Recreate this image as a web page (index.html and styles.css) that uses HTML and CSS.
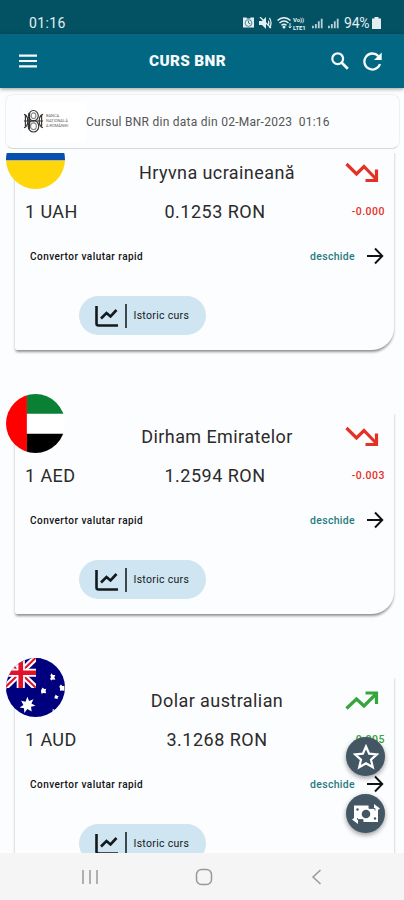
FILE: index.html
```
<!DOCTYPE html>
<html lang="ro">
<head>
<meta charset="utf-8">
<title>Curs BNR</title>
<link rel="stylesheet" href="styles.css">
</head>
<body>
<svg class="defs" aria-hidden="true">
  <symbol id="down" viewBox="0 0 34 22"><path d="M1.5 2 11.5 12 19 4.500 31 17M31.500 7.500V18.500H20.500" fill="none" stroke="currentColor" stroke-width="3.200"/></symbol>
  <symbol id="up" viewBox="0 0 34 22"><path d="M1.500 18.500 11.500 9 19 16 31 4M20.500 3H31.500V14" fill="none" stroke="currentColor" stroke-width="3.200"/></symbol>
  <symbol id="arrow" viewBox="0 0 18 18"><path d="M1 9H16M9 1.500 16.300 9 9 16.500" fill="none" stroke="currentColor" stroke-width="1.900"/></symbol>
  <symbol id="chart" viewBox="0 0 24 22"><path d="M1.500 1V18.500Q1.500 20.500 3.500 20.500H23" fill="none" stroke="currentColor" stroke-width="2.600"/><path d="M6 13.500 11.500 8 15.500 11.500 21.500 5" fill="none" stroke="currentColor" stroke-width="2.600"/></symbol>
  <symbol id="bars" viewBox="0 0 12 11"><path d="M0 8h2v3H0zM3.200 6h2v5h-2zM6.400 3h2v8h-2zM9.600 0h2v11h-2z" fill="currentColor"/></symbol>
</svg>
<header class="status">
  <span class="time">01:16</span>
  <span class="indicators">
    <svg class="i-alarm" viewBox="0 0 12 12"><path d="M0 0h4v1h4V0h4v11H0z" fill="currentColor"/><circle cx="6" cy="6" r="3.700" fill="none" stroke="#035264" stroke-width=".7"/><path d="M6 3.500V6l2 1" fill="none" stroke="#035264" stroke-width=".8"/></svg>
    <svg class="i-mute" viewBox="0 0 13 12"><path d="M0 4h3l4-4v12L3 8H0zM9 3q3 3 0 6" fill="currentColor"/><path d="M10.500 1q3 5 0 10M1 0l11 11" fill="none" stroke="currentColor" stroke-width="1.300"/></svg>
    <svg class="i-wifi" viewBox="0 0 16 12"><path d="M.5 3.500Q7 -2 13.500 3.500M2.500 6Q7 2 11.500 6M4.500 8.300Q7 6.300 9.500 8.300" fill="none" stroke="currentColor" stroke-width="1.500"/><circle cx="7" cy="10" r="1.500" fill="currentColor"/><path d="M13 6v5m-1.300-1.500L13 11l1.400-1.500" stroke="currentColor" fill="none"/></svg>
    <span class="volte"><span>Vo))</span><span>LTE1</span></span>
    <svg class="i-sig" viewBox="0 0 12 11"><use href="#bars"/></svg>
    <svg class="i-sig" viewBox="0 0 12 11"><use href="#bars"/></svg>
    <span class="percent">94%</span>
    <svg class="i-bat" viewBox="0 0 9 12"><path d="M2.500 0h4v1.500H9V12H0V1.500h2.500z" fill="currentColor"/></svg>
  </span>
</header>
<nav class="appbar">
  <svg class="menu" viewBox="0 0 19 14"><path d="M0 1.300h19M0 7h19M0 12.700h19" stroke="currentColor" stroke-width="2.200"/></svg>
  <h1>CURS BNR</h1>
  <svg class="search" viewBox="0 0 18 18"><circle cx="6.700" cy="6.700" r="5.400" fill="none" stroke="currentColor" stroke-width="2.200"/><path d="M10.500 10.500 16.800 16.800" stroke="currentColor" stroke-width="2.700"/></svg>
  <svg class="refresh" viewBox="0 0 19 19"><path d="M15.300 4.100A8 8 0 1 0 17 12" fill="none" stroke="currentColor" stroke-width="2.300"/><path d="M18.700.5V8H11z" fill="currentColor"/></svg>
</nav>
<section class="info">
  <div class="bnr">
    <svg viewBox="0 0 22 26"><g fill="none" stroke="#333" stroke-width="1.200"><ellipse cx="11" cy="7" rx="5" ry="5.500"/><ellipse cx="11" cy="18" rx="5.500" ry="6"/><ellipse cx="11" cy="7" rx="2.500" ry="3" stroke="#888"/><ellipse cx="11" cy="18" rx="3" ry="3.500" stroke="#888"/><path d="M6.500 4v17" stroke-width="2"/><path d="M1 5.500q4 1 4 7t-4 7M21 5.500q-4 1-4 7t4 7M2.500 7v11M19.500 7v11M1 12.500h20"/></g></svg>
    <span>BANCA<br>NAȚIONALĂ<br>A ROMÂNIEI</span>
  </div>
  <p>Cursul BNR din data din 02-Mar-2023 &nbsp;01:16</p>
</section>
<main class="list">
  <article class="item">
    <svg class="flag" viewBox="0 0 58 58"><clipPath id="c"><circle cx="29" cy="29" r="29"/></clipPath><g clip-path="url(#c)"><path fill="#0b4fae" d="M0 0h58v30H0z"/><path fill="#ffd60a" d="M0 30h58v28H0z"/></g></svg>
    <div class="card">
      <div class="row"><h2>Hryvna ucraineană</h2><svg class="trend fall"><use href="#down"/></svg></div>
      <div class="row"><span class="unit">1 UAH</span><span class="rate">0.1253 RON</span><span class="delta fall">-0.000</span></div>
      <div class="row quick"><span class="conv">Convertor valutar rapid</span><span class="open">deschide</span><svg class="arrow"><use href="#arrow"/></svg></div>
      <button class="history"><svg><use href="#chart"/></svg><i></i><span>Istoric curs</span></button>
    </div>
  </article>
  <article class="item">
    <svg class="flag" viewBox="0 0 58 58"><g clip-path="url(#c)"><path fill="#fff" d="M0 0h58v58H0z"/><path fill="#0a8035" d="M20 0h38v19.500H20z"/><path fill="#000" d="M20 39h38v19H20z"/><path fill="#f00" d="M0 0h20.500v58H0z"/></g></svg>
    <div class="card">
      <div class="row"><h2>Dirham Emiratelor</h2><svg class="trend fall"><use href="#down"/></svg></div>
      <div class="row"><span class="unit">1 AED</span><span class="rate">1.2594 RON</span><span class="delta fall">-0.003</span></div>
      <div class="row quick"><span class="conv">Convertor valutar rapid</span><span class="open">deschide</span><svg class="arrow"><use href="#arrow"/></svg></div>
      <button class="history"><svg><use href="#chart"/></svg><i></i><span>Istoric curs</span></button>
    </div>
  </article>
  <article class="item">
    <svg class="flag" viewBox="0 0 58 58"><g clip-path="url(#c)"><path fill="#00007f" d="M0 0h58v58H0z"/><path d="M-1 0 29 29M29 0-1 29" stroke="#fff" stroke-width="6"/><path d="M-1 0 29 29M29 0-1 29" stroke="#e2122d" stroke-width="2"/><path d="M0 14.500h29.500M14.500 0v29.500" stroke="#fff" stroke-width="8"/><path d="M0 14.500h29.500M14.500 0v29.500" stroke="#e2122d" stroke-width="4.600"/><path fill="#00007f" d="M29.500 0h5v34h-34v-4.500h29z"/><g fill="#fff"><path d="m21 38 1.700 4.200 4.300-1.700-2 4.200 4 2.200-4.400 1 .6 4.600-4.200-2.300L18 54l-.3-4.500-4.300-.8 3.700-2.600-2.200-4 4.300 1z"/><path d="m45 15 1 1.800h2.500l-1 2.200 1 2.400-2.600-.2L44.500 22l-1.200-1.500 1-1.600-.7-2zM36 29l1.500 1.500 2-.2-.6 2.200.6 2.200-2.500-.2-2 .7-.7-2.200.5-2zM54 26l1.500 1.500h2v4.700l-2.500-.2-2 .2.200-2.200-.8-2zM49 36l1 1.200 1.800.3-1 1.500-.2 1.500-1.500-.7-1.500.1.200-1.700z"/><path d="m46 50 2 1.500 2.500.1-.6 2 .1 2.600-3 .2-1.500-1.600z"/></g></g></svg>
    <div class="card">
      <div class="row"><h2>Dolar australian</h2><svg class="trend rise"><use href="#up"/></svg></div>
      <div class="row"><span class="unit">1 AUD</span><span class="rate wide">3.1268 RON</span><span class="delta rise">0.005</span></div>
      <div class="row quick"><span class="conv">Convertor valutar rapid</span><span class="open">deschide</span><svg class="arrow"><use href="#arrow"/></svg></div>
      <button class="history"><svg><use href="#chart"/></svg><i></i><span>Istoric curs</span></button>
    </div>
  </article>
</main>
<div class="fabs">
  <button class="fab"><svg viewBox="0 0 26 26"><path d="m13 2.500 3.100 7.200 7.800.7-5.900 5.200 1.800 7.700-6.800-4.100-6.800 4.100L8 15.600l-5.900-5.200 7.800-.7z" fill="none" stroke="#fff" stroke-width="2.200"/></svg></button>
  <button class="fab"><svg viewBox="0 0 30 26"><path d="M3 4.500h15V7h5V3l6 4.500-2 1.500v12H12v-2H7v4l-6-4.500L3 17z" fill="#fff"/><path d="M18 4v3.500h6V9.500M12 22v-3.500H6.500V17" fill="none" stroke="#435664" stroke-width=".9"/><circle cx="15" cy="13" r="4.300" fill="#435664"/><circle cx="6.500" cy="8.500" r="1.200" fill="#435664"/><circle cx="24" cy="17.500" r="1.200" fill="#435664"/></svg></button>
</div>
<footer class="sysnav">
  <svg viewBox="0 0 18 18"><path d="M2 2v14M9 2v14M16 2v14" stroke="#999" stroke-width="1.500"/></svg>
  <svg viewBox="0 0 18 18"><rect x="1.500" y="1.500" width="15" height="15" rx="5" fill="none" stroke="#999" stroke-width="1.500"/></svg>
  <svg viewBox="0 0 18 18"><path d="M12.500 2 5 9l7.500 7" fill="none" stroke="#999" stroke-width="1.500"/></svg>
</footer>
</body>
</html>
```
FILE: styles.css
```
* { box-sizing: border-box; }
body {
  margin: 0;
  width: 404px;
  height: 900px;
  overflow: hidden;
  display: flex;
  flex-direction: column;
  background: #fbfdfe;
  color: #2b2b2b;
  font-family: Roboto, sans-serif;
}
h1, h2, p { margin: 0; }
svg { display: block; flex: none; }
button { border: 0; padding: 0; font-family: inherit; }
.defs { position: absolute; width: 0; height: 0; }

.status {
  height: 34px;
  padding: 12px 23px 0 29px;
  display: flex;
  justify-content: space-between;
  align-items: center;
  background: #035264;
  color: #e3eef1;
}
.time { font-size: 14px; letter-spacing: .4px; }
.indicators { display: flex; align-items: center; }
.i-alarm { width: 11px; height: 12px; margin-right: 5px; }
.i-mute { width: 13px; height: 12px; margin-right: 5px; }
.i-wifi { width: 16px; height: 12px; }
.volte { display: flex; flex-direction: column; gap: 1px; width: 15px; margin-right: 4px; font-size: 6px; line-height: 7px; font-weight: 700; letter-spacing: -.1px; }
.i-sig { width: 11px; height: 11px; margin-right: 5px; opacity: .8; }
.percent { font-size: 14px; width: 28px; letter-spacing: -.2px; }
.i-bat { width: 9px; height: 12px; }

.appbar {
  position: relative;
  z-index: 1;
  height: 54px;
  flex: none;
  display: flex;
  align-items: center;
  padding: 0 22px 0 19px;
  background: #026783;
  color: #f5fafb;
  box-shadow: 0 1px 4px rgba(0, 0, 0, .4);
}
.menu { width: 18px; height: 14px; }
.appbar h1 { margin-left: 112px; flex: 1; font-size: 15.300px; font-weight: 900; letter-spacing: .35px; white-space: nowrap; }
.search { width: 18px; height: 18px; margin-right: 14px; }
.refresh { width: 19px; height: 19px; }

.info {
  margin: 6px 4px 0 5px;
  height: 55px;
  flex: none;
  display: flex;
  align-items: center;
  border: 1px solid #eef0f2;
  border-bottom: 1.500px solid #d5d7da;
  border-radius: 8px;
  background: #fcfdfe;
}
.bnr { width: 63px; height: 40px; margin-left: 17px; display: flex; align-items: center; gap: 2px; background: #fff; }
.bnr svg { width: 21px; height: 25px; }
.bnr span { font-size: 4px; line-height: 4.700px; color: #666; }
.info p { font-size: 12px; letter-spacing: .26px; color: #555; white-space: nowrap; }

.list { margin-top: 4px; height: 700px; flex: none; overflow: hidden; }
.item { position: relative; height: 264px; padding: 15px 10px 0 15px; }
.item:first-child { margin-top: -23px; }
.flag { position: absolute; z-index: 1; left: 5.500px; top: 0; width: 59px; height: 59px; }
.card {
  height: 205px;
  padding-top: 8px;
  border-radius: 4px 4px 22px 2px;
  background: #fcfdfe;
  box-shadow: 0 3px 3px -1px rgba(0, 0, 0, .36), 0 1px 3px rgba(0, 0, 0, .16);
  clip-path: inset(5px -8px -8px -8px);
}
.row { height: 39px; display: grid; grid-template-columns: 102px 200px 1fr; align-items: center; padding-right: 9px; }
.row h2 { grid-column: 2; text-align: center; font-size: 18px; font-weight: 400; letter-spacing: .42px; white-space: nowrap; }
.trend { width: 34px; height: 22px; margin-left: 28px; }
.fall { color: #e53026; }
.rise { color: #35a53c; }
.unit { padding-left: 10px; font-size: 18px; letter-spacing: .4px; white-space: nowrap; }
.rate { padding-right: 4px; text-align: center; font-size: 18px; letter-spacing: .5px; }
.rate.wide { padding: 0; }
.delta { text-align: right; font-size: 10.500px; font-weight: 500; letter-spacing: .5px; }
.quick { height: 50px; display: flex; padding: 0 10px 0 15px; }
.conv { flex: 1; font-size: 10px; font-weight: 500; letter-spacing: .47px; color: #111; }
.open { font-size: 10.500px; font-weight: 500; letter-spacing: .3px; color: #277a82; }
.arrow { width: 18px; height: 18px; margin-left: 11px; color: #111; }
.history {
  width: 127px;
  height: 39px;
  margin: 15px 0 0 63.500px;
  display: flex;
  align-items: center;
  padding-left: 16px;
  border-radius: 20px;
  background: #cfe5f1;
  color: #14191d;
}
.history svg { width: 24px; height: 22px; }
.history i { width: 2px; height: 24px; margin: 0 7px 0 6px; background: #3c4952; }
.history span { font-size: 10.500px; letter-spacing: .3px; }

.fabs { position: absolute; z-index: 2; left: 346px; top: 737px; display: flex; flex-direction: column; gap: 18px; }
.fab { width: 39px; height: 39px; border-radius: 50%; background: #435664; display: grid; place-items: center; box-shadow: 0 2px 5px rgba(0, 0, 0, .4); }
.fab svg { width: 26px; height: 26px; }
.fab:last-child svg { width: 30px; }

.sysnav { height: 47px; flex: none; padding: 0 78px 0 81px; display: flex; align-items: center; justify-content: space-between; background: #f5f5f5; }
.sysnav svg { width: 18px; height: 18px; }
```
